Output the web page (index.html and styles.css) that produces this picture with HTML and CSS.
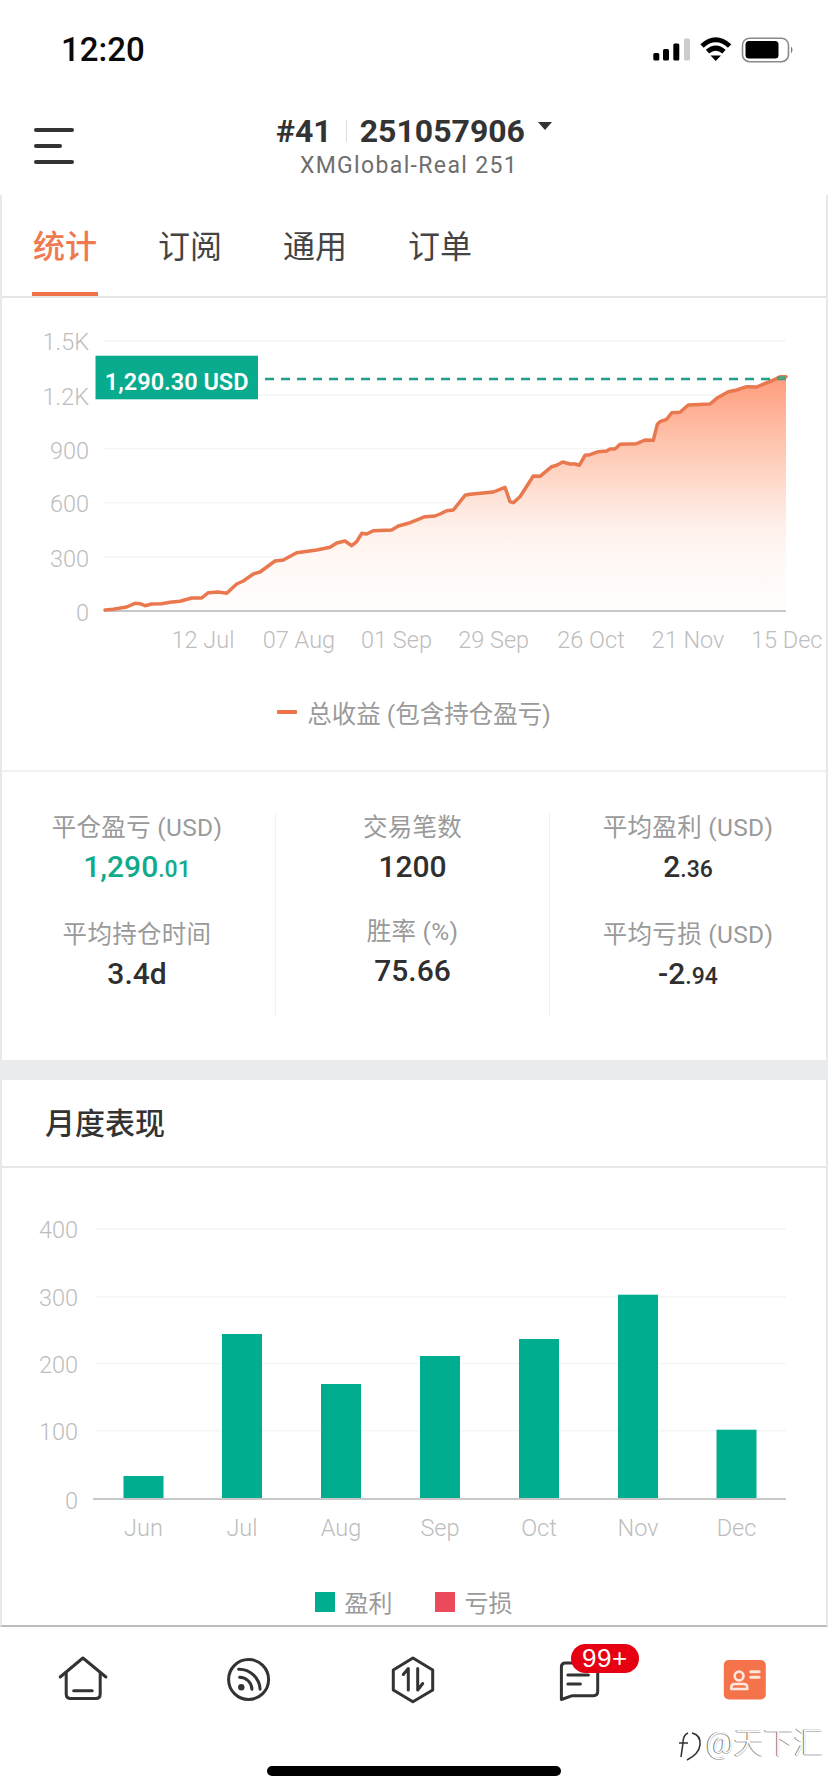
FILE: index.html
```html
<!DOCTYPE html>
<html lang="zh">
<head>
<meta charset="utf-8">
<title>XMGlobal-Real 251</title>
<link rel="stylesheet" href="styles.css">
</head>
<body>
<div class="page">
  <div class="status">
    <span class="time">12:20</span>
    <svg class="status-icons" width="142" height="26" viewBox="653 37 142 26">
      <rect x="653.3" y="53" width="6" height="7.5" rx="1.5" fill="#000"/>
      <rect x="663" y="49" width="6" height="11.5" rx="1.5" fill="#000"/>
      <rect x="673.3" y="43.5" width="6" height="17" rx="1.5" fill="#000"/>
      <rect x="684" y="38.5" width="6" height="22" rx="1.5" fill="#ccc"/>
      <path d="M702 46 Q715.7 33.5 729.6 46" fill="none" stroke="#000" stroke-width="5"/>
      <path d="M707.5 51.6 Q715.7 44.5 724 51.6" fill="none" stroke="#000" stroke-width="5"/>
      <path d="M710.5 55.5 H721 L715.7 61 Z" fill="#000"/>
      <rect x="742.5" y="38.2" width="46" height="23.5" rx="7" fill="none" stroke="#8a8a8a" stroke-width="1.6"/>
      <rect x="745.5" y="41" width="33" height="17.5" rx="3.5" fill="#000"/>
      <path d="M791 46.5 Q794 49.5 791 53.5 Z" fill="#777"/>
    </svg>
  </div>

  <header class="topbar">
    <div class="menu"><i class="menu-line"></i><i class="menu-line menu-short"></i><i class="menu-line"></i></div>
    <div class="account">
      <div class="account-main"><span>#41</span><i class="account-sep"></i><span>251057906</span><i class="caret"></i></div>
      <div class="account-sub">XMGlobal-Real 251</div>
    </div>
  </header>

  <main class="card">
    <nav class="tabs">
      <span class="tab tab-active">统计</span>
      <span class="tab">订阅</span>
      <span class="tab">通用</span>
      <span class="tab">订单</span>
    </nav>

    <section class="chart-section">
      <svg class="chart chart-line" width="824" height="392" viewBox="2 298 824 392">
        <defs>
          <linearGradient id="areaFill" x1="0" y1="0" x2="0" y2="1">
            <stop offset="0" stop-color="#ff9c7c"/>
            <stop offset="0.28" stop-color="#ffc4ad"/>
            <stop offset="0.5" stop-color="#fee0d4"/>
            <stop offset="0.64" stop-color="#fff0ea"/>
            <stop offset="0.77" stop-color="#fff8f5"/>
            <stop offset="1" stop-color="#fffdfd"/>
          </linearGradient>
        </defs>
        <g class="grid">
          <line x1="104" x2="786" y1="340.7" y2="340.7"/>
          <line x1="104" x2="786" y1="395" y2="395"/>
          <line x1="104" x2="786" y1="448.5" y2="448.5"/>
          <line x1="104" x2="786" y1="502.7" y2="502.7"/>
          <line x1="104" x2="786" y1="556.7" y2="556.7"/>
        </g>
        <path fill="url(#areaFill)" d="M105 610 L113.3 609.3 126.7 607 135 603.3 140 603.7 145 605.7 151.7 604 161.7 603.7 170 602.3 180 601.3 191.7 598 201.7 598 208.3 592.7 218.3 592 226.7 593.3 236.7 584 243.3 581 253.3 574 260 572 275 561 283.3 560 296.7 552.7 316.7 550 330 547.3 336.7 543 345 541 351.7 545.7 356.7 541.7 361.7 533.3 366.7 534 373.3 530.7 391.7 530 398.3 526 408.3 523.3 425 516.7 435 516 440 514 446.7 510.7 453.3 510 465 495.3 470 494.3 493.3 492 505 487.3 510 501.7 513.3 502.7 520 496.7 533.3 476 540 476.3 551.7 466.7 556.7 465.3 562.7 462 570 464 575 464 579.3 465.3 585 455.3 590 454.7 598.3 451.7 606.7 451 610 449 615 449 620 444.3 636.7 443.7 645 440 653.3 440.3 657.3 424.3 660 421.7 666.7 419.3 671.7 412.7 680 412.3 688.3 405 710 404 716.7 398.3 728.3 391.7 736.7 390 746.7 386.7 756.7 387 775 379.3 780 376.7 786 376.7 L786 611 L105 611 Z"/>
        <line class="axis" x1="104" x2="786" y1="611" y2="611"/>
        <path class="series" d="M105 610 L113.3 609.3 126.7 607 135 603.3 140 603.7 145 605.7 151.7 604 161.7 603.7 170 602.3 180 601.3 191.7 598 201.7 598 208.3 592.7 218.3 592 226.7 593.3 236.7 584 243.3 581 253.3 574 260 572 275 561 283.3 560 296.7 552.7 316.7 550 330 547.3 336.7 543 345 541 351.7 545.7 356.7 541.7 361.7 533.3 366.7 534 373.3 530.7 391.7 530 398.3 526 408.3 523.3 425 516.7 435 516 440 514 446.7 510.7 453.3 510 465 495.3 470 494.3 493.3 492 505 487.3 510 501.7 513.3 502.7 520 496.7 533.3 476 540 476.3 551.7 466.7 556.7 465.3 562.7 462 570 464 575 464 579.3 465.3 585 455.3 590 454.7 598.3 451.7 606.7 451 610 449 615 449 620 444.3 636.7 443.7 645 440 653.3 440.3 657.3 424.3 660 421.7 666.7 419.3 671.7 412.7 680 412.3 688.3 405 710 404 716.7 398.3 728.3 391.7 736.7 390 746.7 386.7 756.7 387 775 379.3 780 376.7 786 376.7"/>
        <line class="dash" x1="265" x2="786" y1="379" y2="379"/>
        <rect class="tip" x="777" y="376" width="9" height="3.5"/>
        <g class="y-labels">
          <text x="89" y="350">1.5K</text>
          <text x="89" y="404.5">1.2K</text>
          <text x="89" y="458.5">900</text>
          <text x="89" y="511.5">600</text>
          <text x="89" y="566.5">300</text>
          <text x="89" y="620.5">0</text>
        </g>
        <g class="x-labels">
          <text x="203" y="648">12 Jul</text>
          <text x="299" y="648">07 Aug</text>
          <text x="396.5" y="648">01 Sep</text>
          <text x="493.7" y="648">29 Sep</text>
          <text x="591" y="648">26 Oct</text>
          <text x="688" y="648">21 Nov</text>
          <text x="786.7" y="648">15 Dec</text>
        </g>
        <rect class="flag" x="95.5" y="355.7" width="162.5" height="43.6"/>
        <text class="flag-text" x="176.7" y="390">1,290.30 USD</text>
      </svg>
      <div class="legend legend-line"><i class="legend-dash"></i><span>总收益 (包含持仓盈亏)</span></div>
    </section>

    <section class="stats">
      <div class="stat-col">
        <div class="stat"><div class="stat-label">平仓盈亏 (USD)</div><div class="stat-value stat-green">1,290<small>.01</small></div></div>
        <div class="stat"><div class="stat-label">平均持仓时间</div><div class="stat-value">3.4d</div></div>
      </div>
      <div class="stat-col">
        <div class="stat"><div class="stat-label">交易笔数</div><div class="stat-value">1200</div></div>
        <div class="stat"><div class="stat-label">胜率 (%)</div><div class="stat-value">75.66</div></div>
      </div>
      <div class="stat-col">
        <div class="stat"><div class="stat-label">平均盈利 (USD)</div><div class="stat-value">2<small>.36</small></div></div>
        <div class="stat"><div class="stat-label">平均亏损 (USD)</div><div class="stat-value">-2<small>.94</small></div></div>
      </div>
    </section>

    <div class="gap-bar"></div>

    <h2 class="section-title">月度表现</h2>

    <section class="chart-section-bars">
      <svg class="chart chart-bars" width="824" height="410" viewBox="2 1168 824 410">
        <g class="grid">
          <line x1="95" x2="786" y1="1229" y2="1229"/>
          <line x1="95" x2="786" y1="1296.7" y2="1296.7"/>
          <line x1="95" x2="786" y1="1363.5" y2="1363.5"/>
          <line x1="95" x2="786" y1="1430.7" y2="1430.7"/>
        </g>
        <g class="bars">
          <rect x="123.5" y="1476" width="40" height="23"/>
          <rect x="222" y="1334" width="40" height="165"/>
          <rect x="321" y="1384" width="40" height="115"/>
          <rect x="420" y="1356" width="40" height="143"/>
          <rect x="519" y="1339" width="40" height="160"/>
          <rect x="618" y="1294.7" width="40" height="204.3"/>
          <rect x="716.5" y="1429.7" width="40" height="69.3"/>
        </g>
        <line class="axis" x1="93" x2="786" y1="1499" y2="1499"/>
        <g class="y-labels">
          <text x="78" y="1238">400</text>
          <text x="78" y="1306">300</text>
          <text x="78" y="1373">200</text>
          <text x="78" y="1440">100</text>
          <text x="78" y="1509">0</text>
        </g>
        <g class="x-labels">
          <text x="143.5" y="1536">Jun</text>
          <text x="242" y="1536">Jul</text>
          <text x="341" y="1536">Aug</text>
          <text x="440" y="1536">Sep</text>
          <text x="539" y="1536">Oct</text>
          <text x="638" y="1536">Nov</text>
          <text x="736.5" y="1536">Dec</text>
        </g>
      </svg>
      <div class="legend legend-bars">
        <span class="legend-item"><i class="swatch swatch-green"></i>盈利</span>
        <span class="legend-item"><i class="swatch swatch-red"></i>亏损</span>
      </div>
    </section>
  </main>

  <footer class="tabbar">
    <div class="tabbar-row">
      <div class="tabbar-item">
        <svg width="60" height="60" viewBox="52.8 1650 60 60" class="icon">
          <path d="M60 1677 L82.7 1658 L105.7 1677"/>
          <path d="M66 1673 V1694 Q66 1698.5 70.5 1698.5 H95.5 Q100 1698.5 100 1694 V1673"/>
          <path d="M73.5 1690.7 H92"/>
        </svg>
      </div>
      <div class="tabbar-item">
        <svg width="60" height="60" viewBox="218.4 1650 60 60" class="icon">
          <circle cx="249" cy="1679.5" r="20"/>
          <path d="M240 1677.3 A12.3 12.3 0 0 1 252.3 1689.3"/>
          <path d="M239 1669.3 A21 21 0 0 1 260.5 1689.3"/>
          <circle class="icon-solid" cx="241.7" cy="1687.3" r="3.2"/>
        </svg>
      </div>
      <div class="tabbar-item">
        <svg width="60" height="60" viewBox="384 1650 60 60" class="icon">
          <path d="M412.9 1658 L432.7 1670 V1690 L412.9 1701.7 L393.3 1690 V1670 Z"/>
          <path d="M408.3 1690 V1668.5 L403.3 1674.5"/>
          <path d="M417.7 1668.5 V1690 L422.7 1683.5"/>
        </svg>
      </div>
      <div class="tabbar-item">
        <svg width="60" height="60" viewBox="549.6 1650 60 60" class="icon">
          <path d="M561 1699.5 V1667 Q561 1663 565 1663 H593 Q597.3 1663 597.3 1667 V1691.5 Q597.3 1695.7 593 1695.7 H572 Z"/>
          <path d="M567.5 1675 H588"/>
          <path d="M567.5 1684 H580"/>
        </svg>
        <span class="badge">99+</span>
      </div>
      <div class="tabbar-item">
        <svg width="60" height="60" viewBox="715.2 1650 60 60">
          <rect x="724" y="1660" width="42" height="39.5" rx="5" fill="#f5734a"/>
          <circle cx="739.3" cy="1676" r="4.4" fill="none" stroke="#fde6dc" stroke-width="2.6"/>
          <path d="M731.5 1689 V1687.5 Q731.5 1684 735 1684 H744 Q747.5 1684 747.5 1687.5 V1689 Z" fill="none" stroke="#fde6dc" stroke-width="2.6" stroke-linejoin="round"/>
          <path d="M751 1671.7 H759.3 M751 1677.3 H759.3" stroke="#fde6dc" stroke-width="3" stroke-linecap="round"/>
        </svg>
      </div>
    </div>
    <div class="home-indicator"></div>
  </footer>

  <div class="watermark">
    <svg class="watermark-logo" width="26" height="30" viewBox="0 0 26 30">
      <path d="M10 2 Q5 4 5 12 L3 26 M1 12 H10 M14 2 Q23 4 22 14 Q21 23 9 29" fill="none" stroke="#333" stroke-width="1.6"/>
    </svg>
    <span>@天下汇</span>
  </div>
</div>
</body>
</html>
```

FILE: styles.css
```css
* { box-sizing: border-box; }

html, body { margin: 0; padding: 0; background: #fff; }

body {
  width: 828px;
  height: 1792px;
  overflow: hidden;
  font-family: Roboto, "Noto Sans CJK SC", sans-serif;
  color: #333;
}

.page { position: relative; width: 828px; height: 1792px; }

/* status bar */
.status {
  height: 100px;
  display: flex;
  align-items: center;
  justify-content: space-between;
  padding: 0 33px 1px 61px;
}
.time { font-size: 33px; font-weight: 500; color: #0a0a0a; }
.status-icons { display: block; }

/* top bar */
.topbar {
  height: 95px;
  display: grid;
  grid-template-columns: 1fr auto 1fr;
  align-items: start;
}
.menu { display: flex; flex-direction: column; gap: 12px; padding: 28px 0 0 34px; }
.menu-line { display: block; width: 40px; height: 4px; border-radius: 2px; background: #333; }
.menu-short { width: 28px; }

.account { display: flex; flex-direction: column; align-items: center; padding-top: 11px; }
.account-main {
  display: flex;
  align-items: center;
  font-size: 32px;
  font-weight: 700;
  line-height: 40px;
  color: #333;
}
.account-sep { display: block; width: 1px; height: 22px; margin: 0 13px 0 14px; background: #ddd; }
.caret {
  display: block;
  width: 0;
  height: 0;
  margin: -10px 0 0 13px;
  border-left: 7px solid transparent;
  border-right: 7px solid transparent;
  border-top: 8px solid #333;
}
.account-sub {
  font-size: 23px;
  line-height: 30px;
  letter-spacing: 1.35px;
  margin: 0 10px 0 0;
  color: #6e6e6e;
}

/* card */
.card {
  height: 1432px;
  border-left: 2px solid #e8e8e8;
  border-right: 2px solid #e8e8e8;
  border-bottom: 2px solid #bdbdbd;
}

.tabs {
  display: flex;
  gap: 59px;
  height: 103px;
  padding-left: 30px;
  border-bottom: 2px solid #e6e6e6;
}
.tab {
  height: 101px;
  padding: 30px 0 0;
  font-size: 32px;
  line-height: 44px;
  width: 66px;
  text-align: center;
  color: #444;
  border-bottom: 4px solid transparent;
}
.tab-active { color: #ee7a50; border-bottom-color: #ee7349; font-weight: 500; }

/* charts */
.chart { display: block; }
.grid line { stroke: #f5f5f5; stroke-width: 1.5; }
.axis { stroke: #c8c8c8; stroke-width: 2; }
.series {
  fill: none;
  stroke: #e9784f;
  stroke-width: 3.5;
  stroke-linejoin: round;
  stroke-linecap: round;
}
.dash { stroke: #1d9f88; stroke-width: 2.5; stroke-dasharray: 9 7; }
.tip { fill: #5d9f7a; }
.flag { fill: #08ab8e; }
.flag-text { fill: #fff; font-size: 23.5px; font-weight: 600; text-anchor: middle; }
.y-labels text { fill: #bdbdbd; font-size: 23.5px; font-weight: 300; text-anchor: end; }
.x-labels text { fill: #bdbdbd; font-size: 23.5px; font-weight: 300; text-anchor: middle; }
.bars rect { fill: #00ae8f; }

.chart-section { height: 474px; border-bottom: 2px solid #f1f1f1; }

.legend { display: flex; align-items: center; justify-content: center; color: #9a9a9a; font-size: 24px; }
.legend-line { height: 44px; gap: 10px; font-size: 24.5px; }
.legend-dash { display: block; width: 20px; height: 4px; border-radius: 1px; background: #ee7349; }
.legend-bars { height: 47px; gap: 42px; margin-left: -1px; }
.legend-item { display: flex; align-items: center; gap: 10px; }
.swatch { display: block; width: 20px; height: 20px; }
.swatch-green { background: #00ae8f; }
.swatch-red { background: #ea4a5a; }

/* stats */
.stats {
  height: 288px;
  display: grid;
  grid-template-columns: 274px 274px 1fr;
  padding: 41px 0 43px;
}
.stat-col {
  display: flex;
  flex-direction: column;
  gap: 31px;
  border-right: 1px solid #f1f1f1;
}
.stat-col:first-child { padding-right: 3px; }
.stat-col:last-child { border-right: 0; }
.stat { display: flex; flex-direction: column; align-items: center; gap: 5px; }
.stat-label { font-size: 24.5px; letter-spacing: .3px; line-height: 30px; color: #9a9a9a; white-space: nowrap; }
.stat-value { font-size: 30px; font-weight: 500; line-height: 38px; color: #2f2f2f; white-space: nowrap; }
.stat-value small { font-size: 23px; font-weight: 500; }
.stat-green { color: #10ab8c; }

.gap-bar { height: 20px; margin: 0 -2px; background: #ebecee; }

.section-title {
  height: 88px;
  margin: 0;
  padding-left: 43px;
  font-size: 30px;
  font-weight: 500;
  line-height: 88px;
  color: #333;
  border-bottom: 2px solid #e8e8e8;
}

/* tab bar */
.tabbar { height: 165px; display: flex; flex-direction: column; }
.tabbar-row { display: flex; padding-top: 23px; }
.tabbar-item { position: relative; flex: 1; display: flex; justify-content: center; }
.icon { display: block; fill: none; stroke: #333; stroke-width: 3; stroke-linecap: round; stroke-linejoin: round; }
.icon-solid { fill: #333; stroke: none; }
.badge {
  position: absolute;
  left: 74px;
  top: -6px;
  width: 68px;
  height: 29px;
  border-radius: 15px;
  background: #e60012;
  color: #fff;
  font-family: "Liberation Sans", sans-serif;
  font-size: 26px;
  letter-spacing: .5px;
  line-height: 29px;
  text-align: center;
}
.home-indicator {
  width: 294px;
  height: 10px;
  margin: 56px auto 0;
  border-radius: 5px;
  background: #000;
}

/* watermark over the page */
.watermark {
  position: absolute;
  left: 678px;
  top: 1725px;
  display: flex;
  align-items: center;
  gap: 2px;
  font-size: 30px;
  font-weight: 300;
  line-height: 32px;
  color: #fff;
  text-shadow: -1px 0 0 #777, 0 1px 0 #bbb;
}
.watermark-logo { display: block; margin-top: 6px; }
```
